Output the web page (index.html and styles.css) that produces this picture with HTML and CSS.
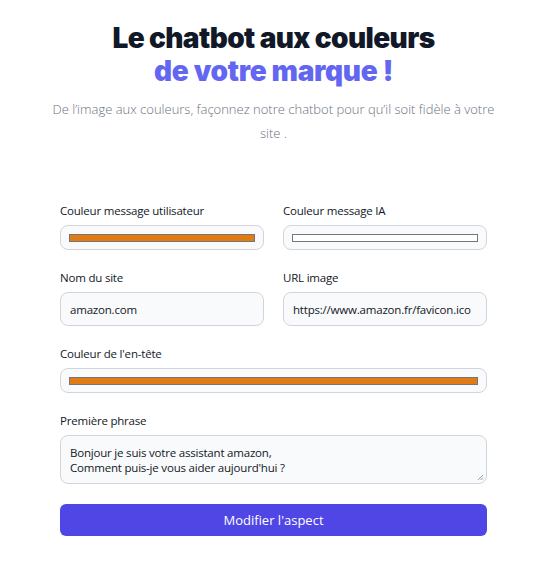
FILE: index.html
```html
<!DOCTYPE html>
<html lang="fr">
<head>
<meta charset="utf-8">
<link rel="stylesheet" href="styles.css">
</head>
<body>
<main class="page">
  <header class="hero">
    <h1 class="title">Le chatbot aux couleurs<br><span class="accent">de votre marque !</span></h1>
    <p class="subtitle">De l’image aux couleurs, façonnez notre chatbot pour qu’il soit fidèle à votre site .</p>
  </header>
  <form class="form">
    <div class="row two">
      <div class="field">
        <label class="label">Couleur message utilisateur</label>
        <div class="input color"><span class="swatch orange"></span></div>
      </div>
      <div class="field">
        <label class="label">Couleur message IA</label>
        <div class="input color"><span class="swatch white"></span></div>
      </div>
    </div>
    <div class="row two">
      <div class="field">
        <label class="label">Nom du site</label>
        <div class="input text">amazon.com</div>
      </div>
      <div class="field">
        <label class="label">URL image</label>
        <div class="input text">https://www.amazon.fr/favicon.ico</div>
      </div>
    </div>
    <div class="row">
      <div class="field">
        <label class="label">Couleur de l'en-tête</label>
        <div class="input color"><span class="swatch orange"></span></div>
      </div>
    </div>
    <div class="row">
      <div class="field">
        <label class="label">Première phrase</label>
        <div class="input area">Bonjour je suis votre assistant amazon,<br>Comment puis-je vous aider aujourd'hui ?
          <svg class="grip" width="7" height="7" viewBox="0 0 7 7"><path d="M6 1L1 6M6 3.5L3.5 6M6 5.5L5.5 6" stroke="#9ca3af" stroke-width="1"/></svg>
        </div>
      </div>
    </div>
    <button type="button" class="btn">Modifier l'aspect</button>
  </form>
</main>
</body>
</html>
```
FILE: styles.css
```css
* { box-sizing: border-box; }
body {
  margin: 0;
  background: #ffffff;
  font-family: "Open Sans", "Noto Sans", sans-serif;
  color: #111827;
}
.page {
  padding: 22px 0 0 0;
}
.hero {
  text-align: center;
  padding-left: 6px;
}
.title {
  margin: 0;
  font-family: "Inter", sans-serif;
  font-weight: 900;
  font-size: 28px;
  line-height: 33px;
  letter-spacing: -0.6px;
  color: #111827;
}
.accent { color: #6366f1; letter-spacing: -0.3px; }
.subtitle {
  margin: 9px auto 0;
  width: 450px;
  font-size: 13px;
  line-height: 24px;
  font-weight: 300;
  color: #6b7280;
}
.form {
  margin: 58px 0 0 60px;
  width: 427px;
  display: flex;
  flex-direction: column;
  gap: 20px;
}
.row { display: flex; flex-direction: column; }
.row.two {
  display: grid;
  grid-template-columns: 1fr 1fr;
  column-gap: 19px;
}
.field { display: flex; flex-direction: column; }
.label {
  font-size: 11.5px;
  letter-spacing: -0.2px;
  line-height: 16px;
  color: #111827;
  margin-bottom: 6px;
}
.input {
  border: 1px solid #d1d5db;
  background: #f9fafb;
  border-radius: 8px;
  font-size: 11.5px;
  letter-spacing: -0.2px;
  color: #111827;
}
.input.color {
  height: 25px;
  padding: 8px 8px 7px;
  display: flex;
}
.swatch {
  flex: 1;
  height: 8px;
  border: 1px solid #767676;
}
.swatch.orange { background: #e07b16; }
.swatch.white { background: #ffffff; }
.input.text {
  height: 34px;
  padding: 0 9px;
  display: flex;
  align-items: center;
}
.input.area {
  position: relative;
  height: 49px;
  padding: 9px 9px;
  line-height: 15px;
}
.grip {
  position: absolute;
  right: 2px;
  bottom: 2px;
}
.btn {
  height: 32px;
  border: 0;
  border-radius: 6px;
  background: #4f46e5;
  color: #ffffff;
  font-family: inherit;
  font-size: 13px;
}
```
